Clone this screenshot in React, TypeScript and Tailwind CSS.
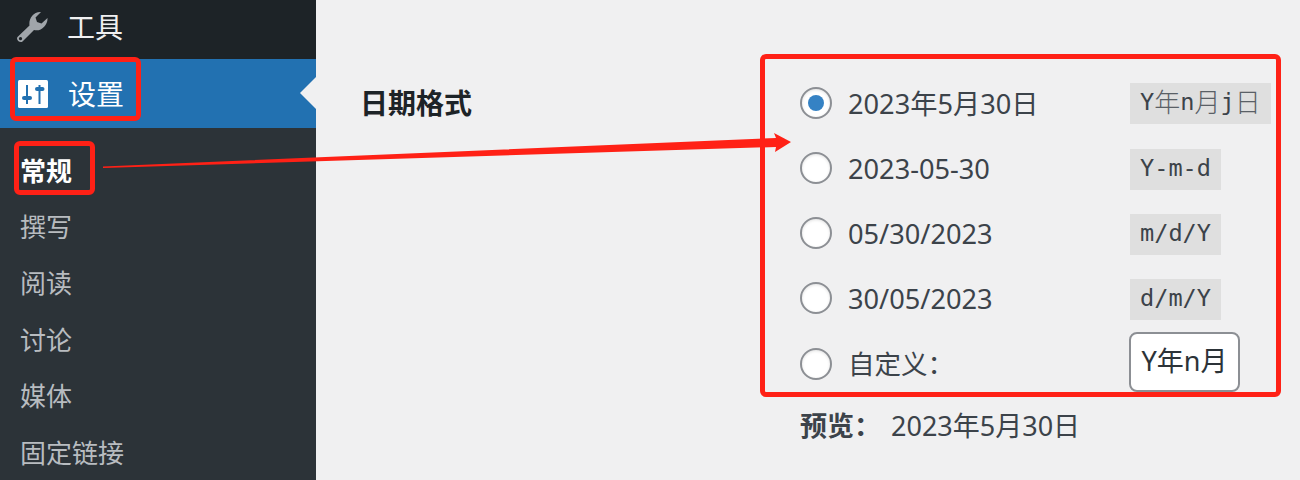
import type { ReactNode } from 'react'

const FONT = "font-['Noto_Sans','Noto_Sans_CJK_SC',sans-serif]"
const MONO = "font-['DejaVu_Sans_Mono','Noto_Sans_CJK_SC',monospace]"

const subItems = ['撰写', '阅读', '讨论', '媒体', '固定链接']

function Cjk({ children }: { children: ReactNode }) {
  return <span className="text-[26px] font-light text-[#5a6066]">{children}</span>
}

const formats: { label: string; code: ReactNode; checked?: boolean }[] = [
  {
    label: '2023年5月30日',
    code: (
      <>
        Y<Cjk>年</Cjk>n<Cjk>月</Cjk>j<Cjk>日</Cjk>
      </>
    ),
    checked: true,
  },
  { label: '2023-05-30', code: 'Y-m-d' },
  { label: '05/30/2023', code: 'm/d/Y' },
  { label: '30/05/2023', code: 'd/m/Y' },
]

function Radio({ checked }: { checked?: boolean }) {
  return (
    <span className="flex h-8 w-8 shrink-0 items-center justify-center rounded-full border-2 border-[#8c8f94] bg-white shadow-[inset_0_1px_3px_rgba(0,0,0,0.12)]">
      {checked ? <span className="h-4 w-4 rounded-full bg-[#3582c4]" /> : null}
    </span>
  )
}

function WrenchIcon() {
  return (
    <svg viewBox="0 0 32 32" className="h-8 w-8" fill="#a0a5aa">
      <path
        fillRule="evenodd"
        d="M1.5 26L13.5 14.5C12.5 8 17 .5 25 1L19.5 6.5L21 11L25.5 12.5L31.5 7C32 14 25 21 18 19L6.5 30.5C4 32.5 -.5 29 1.5 26ZM4.5 26a1.6 1.6 0 1 0 .01 0Z"
      />
    </svg>
  )
}

function SettingsIcon() {
  return (
    <svg viewBox="0 0 30 28" className="h-[28px] w-[30px]">
      <rect width="30" height="28" rx="1.5" fill="#fff" />
      <path d="M9 5v19M21.5 5v19" stroke="#2271b1" strokeWidth="2" />
      <rect x="4" y="16" width="10" height="4" rx="2" fill="#2271b1" />
      <rect x="17" y="7" width="9.5" height="4" rx="2" fill="#2271b1" />
    </svg>
  )
}

function Sidebar() {
  return (
    <aside className="flex w-[316px] shrink-0 flex-col bg-[#2c3338]">
      <div className="flex h-[59px] shrink-0 items-center bg-[#1d2327] pb-[6px] pl-[16px] text-[28px] text-[#f0f0f1]">
        <WrenchIcon />
        <span className="ml-[19px]">工具</span>
      </div>
      <div className="relative flex h-[69px] shrink-0 items-center bg-[#2271b1] pl-[18px] text-[28px] text-white">
        <SettingsIcon />
        <span className="ml-[20px]">设置</span>
        <span className="absolute right-0 top-[18px] border-y-[16px] border-r-[16px] border-y-transparent border-r-[#f0f0f1]" />
      </div>
      <nav className="flex flex-col pt-[15px] text-[26px] text-[#b8bcc0]">
        <a className="flex h-[56.4px] shrink-0 items-center pl-[20px] font-bold text-white">常规</a>
        {subItems.map((item) => (
          <a key={item} className="flex h-[56.4px] shrink-0 items-center pl-[20px]">
            {item}
          </a>
        ))}
      </nav>
    </aside>
  )
}

function DateFormat() {
  return (
    <main className="flex flex-1 bg-[#f0f0f1] pl-[44px] pt-[70px] text-[27px] text-[#3c434a]">
      <h2 className="flex h-[65px] w-[440px] shrink-0 items-center text-[28px] font-bold text-[#1d2327]">日期格式</h2>
      <div className="flex flex-col">
        {formats.map((f) => (
          <label key={f.label} className="flex h-[65px] items-center">
            <Radio checked={f.checked} />
            <span className="ml-[16px] mt-[3px] w-[282px] text-[27.2px]">{f.label}</span>
            <code
              className={`flex h-[41px] items-center bg-[#dfdfdf] px-[10px] text-[23.6px] ${f.checked ? 'mt-[1px]' : 'mt-[3px]'} ${MONO}`}
            >
              {f.code}
            </code>
          </label>
        ))}
        <label className="flex h-[65px] items-center pt-[3px]">
          <Radio />
          <span className="ml-[16px] mt-[2px] w-[281px] text-[26.5px]">自定义：</span>
          <span className="-mt-[5px] flex h-[60px] w-[111px] items-center justify-center rounded-lg border-2 border-[#8c8f94] bg-white text-[#2c3338]">
            Y年n月
          </span>
        </label>
        <p className="mt-[11px] flex items-center">
          <b>预览：</b>
          <span className="ml-[10px]">2023年5月30日</span>
        </p>
      </div>
    </main>
  )
}

export default function App() {
  return (
    <div className={`relative flex h-[480px] w-[1300px] overflow-hidden ${FONT}`}>
      <Sidebar />
      <DateFormat />
      {/* red annotations over the screenshot */}
      <div className="absolute left-[10px] top-[57px] h-[64px] w-[131px] rounded-md border-[5px] border-[#ff2116]" />
      <div className="absolute left-[14px] top-[141px] h-[54px] w-[81px] rounded-md border-[5px] border-[#ff2116]" />
      <div className="absolute left-[760px] top-[54px] h-[343px] w-[521px] rounded-md border-[5px] border-[#ff2116]" />
      <svg className="absolute left-0 top-0" width="1300" height="480">
        <polygon points="103,166.5 776,138 774,133 791,142 775,152 776,147 103,168" fill="#ff2116" />
      </svg>
    </div>
  )
}
